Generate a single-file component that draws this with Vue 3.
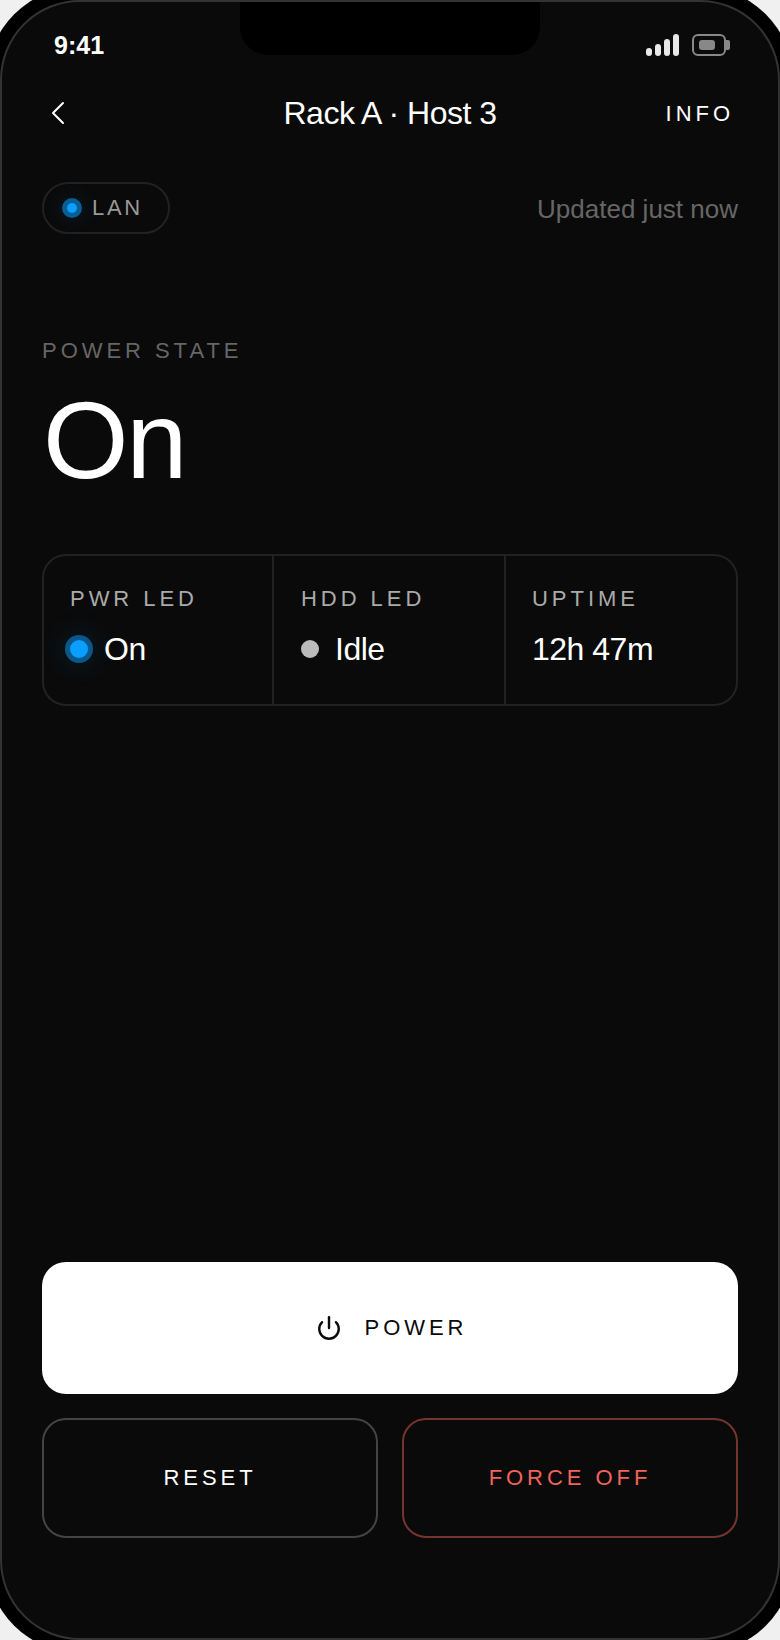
<script setup>
const cells = [
  { label: 'PWR LED', value: 'On', led: 'blue' },
  { label: 'HDD LED', value: 'Idle', led: 'grey' },
  { label: 'UPTIME', value: '12h 47m', led: null },
]
</script>

<template>
  <div class="phone">
    <div class="notch"></div>
    <div class="status">
      <span class="time">9:41</span>
      <div class="status-icons">
        <div class="signal"><i class="b1"></i><i class="b2"></i><i class="b3"></i><i class="b4"></i></div>
        <div class="battery"><div class="battery-fill"></div></div>
        <div class="battery-cap"></div>
      </div>
    </div>

    <header class="nav">
      <svg class="back" width="16" height="24" viewBox="0 0 16 24" fill="none" stroke="#fff" stroke-width="2" stroke-linecap="round" stroke-linejoin="round"><path d="M13 2 L3 12 L13 22"/></svg>
      <h1 class="title">Rack A · Host 3</h1>
      <span class="info">INFO</span>
    </header>

    <div class="meta">
      <div class="pill"><span class="led led-sm"></span><span class="pill-text">LAN</span></div>
      <span class="updated">Updated just now</span>
    </div>

    <section class="state">
      <div class="state-label">POWER STATE</div>
      <div class="state-value">On</div>
    </section>

    <section class="card">
      <div v-for="c in cells" :key="c.label" class="cell">
        <div class="cell-label">{{ c.label }}</div>
        <div class="cell-value">
          <span v-if="c.led === 'blue'" class="led led-lg"></span>
          <span v-if="c.led === 'grey'" class="led-grey"></span>
          <span>{{ c.value }}</span>
        </div>
      </div>
    </section>

    <div class="spacer"></div>

    <button class="btn-power">
      <svg width="26" height="26" viewBox="0 0 24 24" fill="none" stroke="#0a0a0a" stroke-width="2.2" stroke-linecap="round" stroke-linejoin="round"><path d="M12 2v10"/><path d="M18.400 6.600a9 9 0 1 1-12.790 0"/></svg>
      <span>POWER</span>
    </button>
    <div class="row">
      <button class="btn-sec">RESET</button>
      <button class="btn-sec danger">FORCE OFF</button>
    </div>
  </div>
</template>

<style scoped>
.phone {
  position: relative;
  width: 780px;
  height: 1640px;
  box-sizing: border-box;
  border: 2px solid #333;
  border-radius: 80px;
  background: #0a0a0a;
  box-shadow: 0 0 0 13px #000;
  padding: 0 40px;
  display: flex;
  flex-direction: column;
  overflow: hidden;
  color: #fff;
  font-family: "Liberation Sans", Arial, sans-serif;
}
.notch {
  position: absolute;
  top: -2px;
  left: 238px;
  width: 300px;
  height: 55px;
  background: #000;
  border-radius: 0 0 28px 28px;
}
.status {
  display: flex;
  justify-content: space-between;
  align-items: center;
  height: 42px;
  margin-top: 22px;
  padding: 0 8px 0 12px;
}
.time { font-size: 25px; font-weight: 700; }
.status-icons { display: flex; align-items: center; }
.signal { display: flex; align-items: flex-end; gap: 3px; height: 22px; margin-right: 13px; }
.signal i { display: block; width: 6px; background: #e8e8e8; border-radius: 3px; }
.b1 { height: 8px; } .b2 { height: 12px; } .b3 { height: 17px; } .b4 { height: 22px; }
.battery {
  box-sizing: border-box;
  width: 34px;
  height: 22px;
  border: 2px solid #888;
  border-radius: 6px;
  display: flex;
  align-items: center;
  justify-content: center;
}
.battery-fill { width: 16px; height: 10px; background: #888; border-radius: 3px; margin-right: 4px; }
.battery-cap { width: 4px; height: 10px; background: #888; border-radius: 0 2px 2px 0; }

.nav {
  display: grid;
  grid-template-columns: 1fr auto 1fr;
  align-items: center;
  margin-top: 23px;
  height: 48px;
}
.back { margin-left: 8px; }
.title { margin: 0; font-size: 32px; font-weight: 400; letter-spacing: -0.5px; }
.info { justify-self: end; font-size: 22px; letter-spacing: 3.96px; margin-right: 4px; margin-top: 2px; }

.meta {
  display: flex;
  justify-content: space-between;
  align-items: center;
  margin-top: 45px;
}
.pill {
  box-sizing: border-box;
  width: 128px;
  height: 52px;
  border: 2px solid #222;
  border-radius: 26px;
  display: flex;
  align-items: center;
  padding-left: 23px;
  gap: 15px;
}
.pill-text { font-size: 22px; letter-spacing: 2.64px; color: #999; }
.led { display: block; border-radius: 50%; background: #0a9eff; flex: none; }
.led-sm { width: 10px; height: 10px; box-shadow: 0 0 0 5px rgba(10, 158, 255, .55), 0 0 20px 8px rgba(10, 158, 255, .1); }
.led-lg { width: 18px; height: 18px; box-shadow: 0 0 0 5px rgba(10, 158, 255, .5), 0 0 24px 10px rgba(10, 158, 255, .1); }
.led-grey { display: block; width: 18px; height: 18px; border-radius: 50%; background: #bbb; flex: none; }
.updated { font-size: 26px; color: #666; margin-top: 2px; }

.state { margin-top: 104px; }
.state-label { font-size: 22px; letter-spacing: 3.96px; color: #666; line-height: 26px; }
.state-value { font-size: 110px; line-height: 112px; margin-top: 20px; letter-spacing: -2.2px; margin-left: 1px; }

.card {
  box-sizing: border-box;
  height: 152px;
  margin-top: 58px;
  border: 2px solid #222;
  border-radius: 24px;
  display: grid;
  grid-template-columns: 230px 232px 1fr;
}
.cell { padding: 30px 26px 0; border-right: 2px solid #222; }
.cell:nth-child(2) { padding-left: 27px; }
.cell:last-child { border-right: 0; }
.cell-label { font-size: 22px; letter-spacing: 3.96px; color: #aaa; line-height: 26px; }
.cell-value { display: flex; align-items: center; gap: 16px; margin-top: 19px; font-size: 32px; line-height: 36px; letter-spacing: -0.5px; }

.spacer { flex: 1; }

button { font-family: inherit; cursor: pointer; }
.btn-power {
  height: 132px;
  border: 0;
  border-radius: 24px;
  background: #fff;
  color: #0a0a0a;
  display: flex;
  align-items: center;
  justify-content: center;
  gap: 23px;
  padding: 0 0 0 3px;
  font-size: 22px;
  letter-spacing: 3.96px;
}
.row { display: grid; grid-template-columns: 1fr 1fr; gap: 24px; margin: 24px 0 100px; }
.btn-sec {
  box-sizing: border-box;
  height: 120px;
  border: 2px solid #444;
  border-radius: 24px;
  background: transparent;
  color: #fff;
  font-size: 22px;
  letter-spacing: 3.96px;
}
.danger { border-color: #75352f; color: #f2635a; }
</style>

<style>
html, body { background: #f0f0f0; margin: 0; overflow: hidden; }
</style>
